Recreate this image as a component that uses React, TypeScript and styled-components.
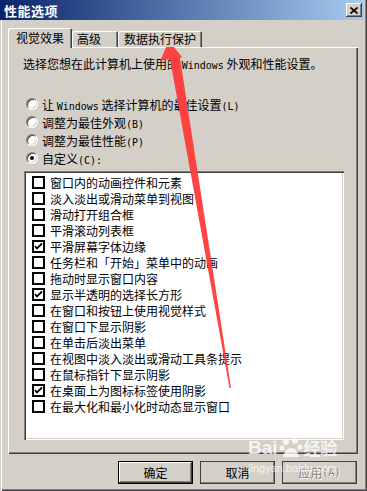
import styled, { createGlobalStyle } from 'styled-components';

const GlobalStyle = createGlobalStyle`
  html, body {
    margin: 0;
    padding: 0;
    background: #d4d0c8;
  }
  body {
    font-family: "Noto Sans CJK SC", "Noto Sans", sans-serif;
    font-size: 12px;
    color: #000;
  }
`;

const Window = styled.div`
  position: relative;
  width: 367px;
  height: 491px;
  box-sizing: border-box;
  background: #d4d0c8;
  display: flex;
  flex-direction: column;
  overflow: hidden;
  box-shadow: inset 1px 0 0 #d4d0c8, inset 2px 0 0 #fff, inset -1px -1px 0 #404040,
    inset -2px -2px 0 #808080;
`;

const TitleBar = styled.div`
  height: 20px;
  margin-right: 3px;
  display: flex;
  align-items: center;
  padding-left: 4px;
  background: linear-gradient(to right, #0a246a, #a6caf0);
  color: #fff;
  font-weight: bold;
  font-size: 13px;
  letter-spacing: 0.5px;
`;

const CloseButton = styled.div`
  margin-left: auto;
  margin-right: 2px;
  width: 16px;
  height: 14px;
  background: #d4d0c8;
  display: flex;
  align-items: center;
  justify-content: center;
  box-shadow: inset -1px -1px 0 #404040, inset 1px 1px 0 #fff, inset -2px -2px 0 #808080;
`;

const TabStrip = styled.div`
  margin: 8px 0 0 8px;
  height: 19px;
  display: flex;
  align-items: flex-end;
  position: relative;
  z-index: 1;
`;

const Tab = styled.div<{ $w: number; $pad: number; $active?: boolean }>`
  box-sizing: border-box;
  width: ${p => p.$w}px;
  height: ${p => (p.$active ? 20 : 16)}px;
  margin-bottom: ${p => (p.$active ? -1 : 0)}px;
  padding-left: ${p => p.$pad}px;
  display: flex;
  align-items: center;
  background: #d4d0c8;
  line-height: 14px;
  border-radius: 2px 2px 0 0;
  box-shadow: inset 1px 1px 0 #fff, inset -1px 0 0 #404040, inset -2px 0 0 #808080;
`;

const Panel = styled.div`
  margin-left: 8px;
  width: 350px;
  height: 407px;
  box-sizing: border-box;
  padding-top: 9px;
  display: flex;
  flex-direction: column;
  box-shadow: inset 1px 1px 0 #fff, inset -1px -1px 0 #404040, inset -2px -2px 0 #808080;
`;

const Intro = styled.div`
  margin-left: 15px;
  line-height: 16px;
  white-space: nowrap;
`;

const Latin = styled.span`
  font-family: "DejaVu Sans Mono", "Liberation Mono", monospace;
  font-size: 10px;
`;

const RadioGroup = styled.div`
  margin-top: 21px;
  padding-left: 18px;
  display: flex;
  flex-direction: column;
`;

const RadioRow = styled.div`
  height: 18px;
  display: flex;
  align-items: center;
  gap: 4px;
  white-space: nowrap;
`;

const RadioCircle = styled.div<{ $on?: boolean }>`
  width: 12px;
  height: 12px;
  box-sizing: border-box;
  border-radius: 50%;
  background: #fff;
  border: 1px solid;
  border-color: #808080 #fff #fff #808080;
  box-shadow: inset 1px 1px 0 #404040, inset -1px -1px 0 #d4d0c8;
  display: flex;
  align-items: center;
  justify-content: center;
  &::after {
    content: '';
    display: ${p => (p.$on ? 'block' : 'none')};
    width: 4px;
    height: 4px;
    border-radius: 50%;
    background: #000;
  }
`;

const ListBox = styled.div`
  margin: 4px 0 0 16px;
  width: 320px;
  height: 269px;
  box-sizing: border-box;
  padding-top: 3px;
  background: #fff;
  box-shadow: inset 1px 1px 0 #808080, inset 2px 2px 0 #404040, inset -1px -1px 0 #fff,
    inset -2px -2px 0 #d4d0c8;
`;

const Item = styled.div`
  height: 16px;
  padding-left: 8px;
  display: flex;
  align-items: center;
  gap: 5px;
  white-space: nowrap;
`;

const CheckBox = styled.div`
  width: 13px;
  height: 13px;
  box-sizing: border-box;
  border: 2px solid #000;
  background: #fff;
  display: flex;
  align-items: center;
  justify-content: center;
  flex-shrink: 0;
`;

const ButtonRow = styled.div`
  margin-top: 7px;
  padding-right: 10px;
  display: flex;
  justify-content: flex-end;
  gap: 7px;
`;

const Button = styled.div<{ $default?: boolean; $disabled?: boolean }>`
  width: 75px;
  height: 23px;
  box-sizing: border-box;
  display: flex;
  align-items: center;
  justify-content: center;
  background: #d4d0c8;
  color: ${p => (p.$disabled ? '#808080' : '#000')};
  text-shadow: ${p => (p.$disabled ? '1px 1px 0 #fff' : 'none')};
  border: 1px solid ${p => (p.$default ? '#000' : 'transparent')};
  box-shadow: ${p =>
    p.$default
      ? 'inset -1px -1px 0 #404040, inset 1px 1px 0 #fff, inset -2px -2px 0 #808080'
      : 'inset -1px -1px 0 #808080, inset 1px 1px 0 #fff'};
  ${p => (!p.$default ? 'outline: 1px solid #404040; outline-offset: -1px; border: none; box-shadow: inset -1px -1px 0 #404040, inset 1px 1px 0 #fff, inset -2px -2px 0 #808080;' : '')}
`;

const Overlay = styled.svg`
  position: absolute;
  left: 0;
  top: 0;
  pointer-events: none;
`;

const Watermark = styled.div`
  position: absolute;
  left: 248px;
  top: 436px;
  color: rgba(255, 255, 255, 0.8);
  pointer-events: none;
  display: flex;
  flex-direction: column;
`;

const MarkTop = styled.div`
  display: flex;
  align-items: flex-end;
  font-family: "Liberation Sans", Arial, sans-serif;
  font-weight: bold;
  font-size: 19px;
  line-height: 24px;
  gap: 1px;
`;

const MarkCn = styled.span`
  font-family: "Noto Sans CJK SC", sans-serif;
  font-size: 17px;
  font-weight: bold;
`;

const MarkUrl = styled.div`
  font-family: "Liberation Sans", Arial, sans-serif;
  font-size: 11px;
  line-height: 12px;
  margin-top: 2px;
  color: rgba(255, 255, 255, 0.75);
`;

const items: [string, boolean][] = [
  ['窗口内的动画控件和元素', false],
  ['淡入淡出或滑动菜单到视图', false],
  ['滑动打开组合框', false],
  ['平滑滚动列表框', false],
  ['平滑屏幕字体边缘', true],
  ['任务栏和「开始」菜单中的动画', false],
  ['拖动时显示窗口内容', false],
  ['显示半透明的选择长方形', true],
  ['在窗口和按钮上使用视觉样式', false],
  ['在窗口下显示阴影', false],
  ['在单击后淡出菜单', false],
  ['在视图中淡入淡出或滑动工具条提示', false],
  ['在鼠标指针下显示阴影', false],
  ['在桌面上为图标标签使用阴影', true],
  ['在最大化和最小化时动态显示窗口', false],
];

const Check = () => (
  <svg width='9' height='9' viewBox='0 0 9 9'>
    <path d='M1 4 L3 6.5 L8 1.5' stroke='#000' strokeWidth='1.8' fill='none' />
  </svg>
);

export default function App() {
  return (
    <>
      <GlobalStyle />
      <Window>
        <TitleBar>
          性能选项
          <CloseButton>
            <svg width='8' height='7' viewBox='0 0 8 7'>
              <path d='M0.5 0.5 L7.5 6.5 M7.5 0.5 L0.5 6.5' stroke='#000' strokeWidth='1.6' />
            </svg>
          </CloseButton>
        </TitleBar>

        <TabStrip>
          <Tab $w={64} $pad={8} $active>
            视觉效果
          </Tab>
          <Tab $w={46} $pad={5}>
            高级
          </Tab>
          <Tab $w={84} $pad={6}>
            数据执行保护
          </Tab>
        </TabStrip>

        <Panel>
          <Intro>
            选择您想在此计算机上使用的 <Latin>Windows</Latin> 外观和性能设置。
          </Intro>
          <RadioGroup>
            <RadioRow>
              <RadioCircle />
              <span>
                让 <Latin>Windows</Latin> 选择计算机的最佳设置<Latin>(L)</Latin>
              </span>
            </RadioRow>
            <RadioRow>
              <RadioCircle />
              <span>
                调整为最佳外观<Latin>(B)</Latin>
              </span>
            </RadioRow>
            <RadioRow>
              <RadioCircle />
              <span>
                调整为最佳性能<Latin>(P)</Latin>
              </span>
            </RadioRow>
            <RadioRow>
              <RadioCircle $on />
              <span>
                自定义<Latin>(C):</Latin>
              </span>
            </RadioRow>
          </RadioGroup>

          <ListBox>
            {items.map(([label, on]) => (
              <Item key={label}>
                <CheckBox>{on && <Check />}</CheckBox>
                <span>{label}</span>
              </Item>
            ))}
          </ListBox>
        </Panel>

        <ButtonRow>
          <Button $default>确定</Button>
          <Button>取消</Button>
          <Button $disabled>
            应用<Latin>(A)</Latin>
          </Button>
        </ButtonRow>

        <Watermark>
          <MarkTop>
            <span>Bai</span>
            <svg width='24' height='24' viewBox='0 0 24 24'>
              <g fill='rgba(255,255,255,0.8)'>
                <circle cx='7' cy='6' r='3' />
                <circle cx='16' cy='5' r='3' />
                <circle cx='3' cy='12' r='2.6' />
                <circle cx='21' cy='11' r='2.6' />
                <path d='M4 21 Q6 12 12 12 Q18 12 20 21 Z' />
              </g>
            </svg>
            <MarkCn>经验</MarkCn>
          </MarkTop>
          <MarkUrl>jingyan.baidu.com</MarkUrl>
        </Watermark>

        <Overlay width='367' height='491' viewBox='0 0 367 491'>
          <polygon
            points='169,41 160,61 170,59 229.5,388 231,388 180,58 182,57'
            fill='#ff3b3b'
            opacity='0.95'
          />
        </Overlay>
      </Window>
    </>
  );
}
